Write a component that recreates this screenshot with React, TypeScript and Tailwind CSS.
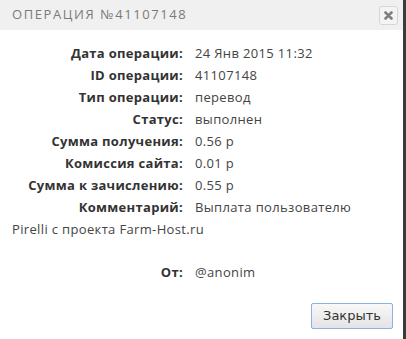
import React from 'react';

const rows: [string, string][] = [
  ['Дата операции:', '24 Янв 2015 11:32'],
  ['ID операции:', '41107148'],
  ['Тип операции:', 'перевод'],
  ['Статус:', 'выполнен'],
  ['Сумма получения:', '0.56 р'],
  ['Комиссия сайта:', '0.01 р'],
  ['Сумма к зачислению:', '0.55 р'],
  ['Комментарий:', 'Выплата пользователю'],
];

const Row = ({ label, value }: { label: string; value: string }) => (
  <div className="flex h-[22px] items-center">
    <div className="w-[183px] shrink-0 text-right font-bold tracking-[0.3px] text-[#333]">{label}</div>
    <div className="pl-[12px] tracking-[0.35px] text-[#444]">{value}</div>
  </div>
);

export default function App() {
  return (
    <div className="flex h-[339px] w-[406px] bg-white" style={{ fontFamily: '"Open Sans", sans-serif' }}>
      <div className="flex w-[403px] flex-col text-[13px]">
        {/* Title bar */}
        <div className="flex h-[30px] items-center justify-between bg-[#f0f0f0] pl-[12px] pr-[5px]">
          <span className="text-[13px] tracking-[1.6px] text-[#7a7a7a]">ОПЕРАЦИЯ №41107148</span>
          <button className="flex h-[19px] w-[19px] items-center justify-center rounded-[3px] border border-[#d6d6d6] bg-[#f4f4f4]">
            <svg width="9" height="9" viewBox="0 0 9 9">
              <path d="M1.5 1.5 L7.5 7.5 M7.5 1.5 L1.5 7.5" stroke="#7e7e7e" strokeWidth="2.6" strokeLinecap="round" />
            </svg>
          </button>
        </div>

        <div className="flex flex-col pt-[13px]">
          {rows.map(([l, v]) => (
            <Row key={l} label={l} value={v} />
          ))}
          <div className="flex h-[22px] items-center pl-[12px] tracking-[0.35px] text-[#444]">Pirelli с проекта Farm-Host.ru</div>
          <div className="h-[21px]" />
          <Row label="От:" value="@anonim" />
        </div>

        <div className="mt-[19px] flex justify-end pr-[10px]">
          <button
            className="h-[26px] w-[82px] rounded-[2px] border border-[#8eb0dc] bg-gradient-to-b from-[#f8f8f8] to-[#e4e4e4] text-[13px] text-[#333]"
            style={{ fontFamily: '"DejaVu Sans", sans-serif' }}
          >
            Закрыть
          </button>
        </div>
      </div>
      <div className="w-[3px] bg-[#3a3a3a]" />
    </div>
  );
}
